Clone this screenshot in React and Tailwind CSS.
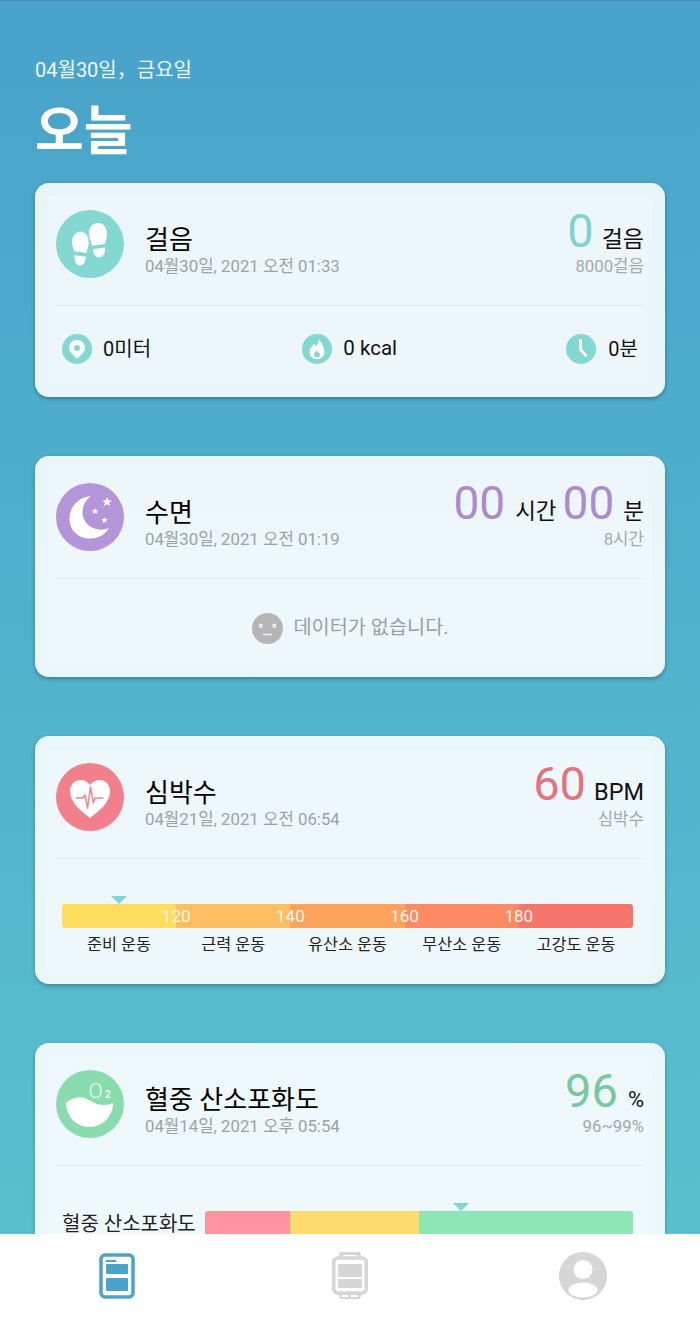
import React from "react"

function StepsIcon() {
  return (
    <svg viewBox="0 0 68 68" className="h-[68px] w-[68px] shrink-0">
      <circle cx="34" cy="34" r="34" fill="#84d8d2" />
      <g fill="#fff">
        <path d="M24.500 21.500c-4.500 0-8.500 5-8.500 10.500 0 3.500 1.400 6 2.200 9.200l12.300 1.800c.4-3.400 2.200-6.200 2.200-10.500 0-6-3.200-11-8.200-11z" />
        <path d="M18.500 45.200l11.300 1.600c-.2 5-2.300 8.800-6 8.700-3.600-.1-5.600-4.800-5.300-10.300z" />
        <path d="M42 13c-5.500 0-9 4.200-9 10.500 0 4.400 2 7.400 3 12.200l13-1.800c.4-3.300 2.500-6 2-10.800C50.500 17.300 47.500 13 42 13z" />
        <path d="M36.700 39.200l12.300-1.800c.5 5.200-1.500 9.600-5.500 10-3.600.3-6.200-3.200-6.800-8.200z" />
      </g>
    </svg>
  )
}

function SleepIcon() {
  return (
    <svg viewBox="0 0 68 68" className="h-[68px] w-[68px] shrink-0">
      <circle cx="34" cy="34" r="34" fill="#b495d9" />
      <path d="M35 13C22 14 13.500 24 13.500 36C13.500 48 23 55.500 34 55.500C43 55.500 49.500 51 53 45C50 46.500 46.500 47 43 46.500C33 45.500 26.500 38 26.500 29.500C26.500 23 29.500 17 35 13Z" fill="#ffffff" />
      <path d="M51 14l1.300 3.300 3.500.2-2.700 2.200.9 3.400-3-1.900-3 1.900.9-3.400-2.700-2.200 3.500-.2z" fill="#ffffff" />
      <path d="M39 25l.9 2.100 2.300.2-1.700 1.500.5 2.200-2-1.200-2 1.200.5-2.200-1.700-1.500 2.300-.2z" fill="#ffffff" />
      <path d="M48.500 34l.9 2.100 2.300.2-1.700 1.500.5 2.200-2-1.200-2 1.200.5-2.200-1.700-1.500 2.300-.2z" fill="#ffffff" />
    </svg>
  )
}

function HeartIcon() {
  return (
    <svg viewBox="0 0 68 68" className="h-[68px] w-[68px] shrink-0">
      <circle cx="34" cy="34" r="34" fill="#f27f8b" />
      <path d="M34 55C25 48 14 40 14 28c0-6.500 5-11 10.500-11 4 0 7.500 2 9.500 5 2-3 5.500-5 9.500-5C49 17 54 21.500 54 28c0 12-11 20-20 27z" fill="#fff" />
      <path d="M20 35h7l2-3 2.500 13 3-21 2.800 16 1.700-5h8" fill="none" stroke="#ee8a96" strokeWidth="1.600" strokeLinejoin="round" strokeLinecap="round" />
    </svg>
  )
}

function OxygenIcon() {
  return (
    <svg viewBox="0 0 68 68" className="h-[68px] w-[68px] shrink-0">
      <circle cx="34" cy="34" r="34" fill="#88dcae" />
      <path d="M10 33c4-4 9-6 15-5.500 7 .5 11 5 18 7 5 1 10 .5 14-1.500 0 13-10 24-23.500 24S10 46 10 33z" fill="#fff" />
      <text x="32.500" y="28" fontFamily="Roboto, sans-serif" fontSize="21" fill="#f2fbf6" fontWeight="300">O</text>
      <text x="49" y="28" fontFamily="Roboto, sans-serif" fontSize="10" fill="#f2fbf6" fontWeight="700">2</text>
    </svg>
  )
}

function PinIcon() {
  return (
    <svg viewBox="0 0 30 30" className="h-[30px] w-[30px] shrink-0">
      <circle cx="15" cy="15" r="15" fill="#84d8d2" />
      <path fillRule="evenodd" d="M15 6c-4.700 0-8 3.400-8 7.700 0 4 4.200 7.700 8 11 3.800-3.300 8-7 8-11C23 9.400 19.700 6 15 6zm0 5a3 3 0 110 6 3 3 0 010-6z" fill="#fff" />
    </svg>
  )
}

function FlameIcon() {
  return (
    <svg viewBox="0 0 30 30" className="h-[30px] w-[30px] shrink-0">
      <circle cx="15" cy="15" r="15" fill="#84d8d2" />
      <path fillRule="evenodd" d="M16.500 5c.7 3.500-1 5.500-3 7.500-.5-1-.7-1.800-.8-3C9.800 12 7.300 15 7.500 18.500c.3 4 3.500 6.700 7.500 6.700s7.500-2.900 7.500-6.900c0-5-3.500-10.500-6-13.300zM15 23.500c-1.800 0-3-1.200-3-2.800 0-1.600 1.400-2.600 2.400-4.200.3 1.200.8 1.600 1.600 1 0 .8 2 1.600 2 3.200 0 1.600-1.200 2.800-3 2.800z" fill="#fff" />
    </svg>
  )
}

function ClockIcon() {
  return (
    <svg viewBox="0 0 30 30" className="h-[30px] w-[30px] shrink-0">
      <circle cx="15" cy="15" r="15" fill="#84d8d2" />
      <path d="M13 5h2.600l.6 10.500 5.400 5.800-2 1.900-6.200-6.700z" fill="#fff" />
    </svg>
  )
}

function DeadFaceIcon() {
  return (
    <svg viewBox="0 0 31 31" className="h-[31px] w-[31px] shrink-0">
      <circle cx="15.500" cy="15.500" r="15.500" fill="#b5b5b5" />
      <path d="M7 11l3.500 3.500M10.500 11L7 14.500M20.500 11l3.500 3.500M24 11l-3.500 3.500M11 21.500h9" stroke="#eef6fa" strokeWidth="1.600" fill="none" />
    </svg>
  )
}

function Marker({ offset }) {
  return (
    <div className={offset}>
      <svg viewBox="0 0 16 8" className="block h-2 w-4">
        <polygon points="0,0 16,0 8,8" fill="#7fd6d6" />
      </svg>
    </div>
  )
}

function TodayTab() {
  return (
    <svg viewBox="0 0 36 46" className="h-[46px] w-9">
      <rect x="2" y="2" width="32" height="42" rx="4" fill="none" stroke="#4ba3c9" strokeWidth="3.500" />
      <rect x="7" y="7" width="10" height="2" fill="#4ba3c9" />
      <rect x="7" y="11" width="22" height="10" rx="1" fill="#4ba3c9" />
      <rect x="7" y="25" width="22" height="13" rx="1" fill="#4ba3c9" />
    </svg>
  )
}

function WatchTab() {
  return (
    <svg viewBox="0 0 36 47" className="h-[47px] w-9">
      <path d="M6 7l2-7h20l2 7zM6 40l2 7h20l2-7z" fill="#d6d6d6" />
      <path d="M11 3h14v2H11zM10 43h6v2h-6zM19 43h7v2h-7z" fill="#fff" />
      <rect x="1.750" y="6" width="32.500" height="35" rx="4" fill="#fff" stroke="#d6d6d6" strokeWidth="3.500" />
      <rect x="6" y="12" width="24" height="13" fill="#d6d6d6" />
      <rect x="6" y="27" width="24" height="9" fill="#d6d6d6" />
    </svg>
  )
}

function ProfileTab() {
  return (
    <svg viewBox="0 0 48 48" className="h-12 w-12">
      <circle cx="24" cy="24" r="24" fill="#d6d6d6" />
      <circle cx="24" cy="17.500" r="9.500" fill="#fff" />
      <ellipse cx="24" cy="38" rx="14.500" ry="7.500" fill="#fff" />
    </svg>
  )
}

function Card({ icon, title, date, right, sub, children }) {
  return (
    <div className="rounded-[14px] bg-[#ffffffe0] p-[13px] shadow-[0_2px_4px_rgba(0,0,0,0.28)]">
      <div className="bg-white/20 pt-[14px] pr-2 pl-2 shadow-[0_0_5px_rgba(255,255,255,0.2)]">
        <div className="flex h-[68px] items-start">
          {icon}
          <div className="ml-[21px] flex-1 pt-[15px]">
            <div className="h-[31px] text-[26px] leading-[31px] text-black">{title}</div>
            <div className="h-[20px] text-[16.8px] leading-[20px] text-[#9da2a5]">{date}</div>
          </div>
          <div className="-mt-[5px] text-right">
            <div className="flex h-[51px] items-baseline justify-end">{right}</div>
            <div className="text-[16.8px] leading-[20px] text-[#a5aaad]">{sub}</div>
          </div>
        </div>
        <div className="mt-[27px] h-px bg-[#e0e8ec]" />
        {children}
      </div>
    </div>
  )
}

const zones = [
  { label: "준비 운동", color: "bg-[#ffdd5e]", mark: "120" },
  { label: "근력 운동", color: "bg-[#ffbf60]", mark: "140" },
  { label: "유산소 운동", color: "bg-[#ffa25c]", mark: "160" },
  { label: "무산소 운동", color: "bg-[#fc8a64]", mark: "180" },
  { label: "고강도 운동", color: "bg-[#f6766c]", mark: null },
]

function HeartRateBar() {
  return (
    <div className="pt-[37px] pr-[11px] pb-[15px] pl-[6px]">
      <Marker offset="ml-[49px]" />
      <div className="flex h-6 overflow-hidden rounded-[3px]">
        {zones.map((z) => (
          <div key={z.label} className={`flex-1 ${z.color}`} />
        ))}
      </div>
      <div className="-mt-6 flex h-6">
        {zones.map((z) => (
          <div key={z.label} className="flex flex-1 justify-end">
            {z.mark && (
              <span className="w-0 overflow-visible">
                <span className="block w-10 -translate-x-5 text-center text-[17px] leading-6 text-[#fff8ec]">{z.mark}</span>
              </span>
            )}
          </div>
        ))}
      </div>
      <div className="mt-[6px] flex">
        {zones.map((z) => (
          <div key={z.label} className="flex-1 text-center text-[16.3px] leading-[22px] whitespace-nowrap text-[#222]">
            {z.label}
          </div>
        ))}
      </div>
    </div>
  )
}

export default function App() {
  return (
    <div className="flex h-[1318px] w-[700px] flex-col overflow-hidden font-['Roboto','Noto_Sans_CJK_KR',sans-serif]">
      <div className="min-h-0 flex-1 overflow-hidden border-t border-[#3f8fb0] bg-gradient-to-b from-[#48a2ca] to-[#5ac0cf] px-[35px]">
        <div className="mt-[55px] text-[20px] leading-[28px] text-[#eef8fc]">04월30일，금요일</div>
        <div className="mt-[18px] text-[53px] leading-[60px] font-semibold text-white">오늘</div>
        <div className="mt-[21px] flex flex-col gap-[59px]">
          <Card
            icon={<StepsIcon />}
            title="걸음"
            date="04월30일, 2021 오전 01:33"
            right={
              <>
                <span className="text-[47px] leading-[51px] text-[#7fd3cd]">0</span>
                <span className="ml-[8px] text-[23px] text-[#111]">걸음</span>
              </>
            }
            sub="8000걸음"
          >
            <div className="flex h-[78px] items-center justify-between pt-[7px] pr-[6px] pl-[6px]">
              <div className="flex items-center gap-[11px]">
                <PinIcon />
                <span className="text-[20px] text-[#111]">0미터</span>
              </div>
              <div className="mr-[18px] flex items-center gap-[11px]">
                <FlameIcon />
                <span className="text-[20.5px] text-[#111]">0 kcal</span>
              </div>
              <div className="flex items-center gap-[12px]">
                <ClockIcon />
                <span className="text-[20px] text-[#111]">0분</span>
              </div>
            </div>
          </Card>

          <Card
            icon={<SleepIcon />}
            title="수면"
            date="04월30일, 2021 오전 01:19"
            right={
              <>
                <span className="text-[46px] leading-[51px] text-[#ab8bcd]">00</span>
                <span className="mr-[6px] ml-[10px] text-[22.5px] text-[#111]">시간</span>
                <span className="text-[46px] leading-[51px] text-[#ab8bcd]">00</span>
                <span className="ml-[9px] text-[22.5px] text-[#111]">분</span>
              </>
            }
            sub="8시간"
          >
            <div className="flex h-[85px] items-center justify-center gap-[11px] pt-[13px]">
              <DeadFaceIcon />
              <span className="text-[19.7px] text-[#9a9fa2]">데이터가 없습니다.</span>
            </div>
          </Card>

          <Card
            icon={<HeartIcon />}
            title="심박수"
            date="04월21일, 2021 오전 06:54"
            right={
              <>
                <span className="text-[47px] leading-[51px] text-[#e4727f]">60</span>
                <span className="ml-[8px] text-[23.5px] text-[#111]">BPM</span>
              </>
            }
            sub="심박수"
          >
            <HeartRateBar />
          </Card>

          <Card
            icon={<OxygenIcon />}
            title="혈중 산소포화도"
            date="04월14일, 2021 오후 05:54"
            right={
              <>
                <span className="text-[47px] leading-[51px] text-[#78c8a0]">96</span>
                <span className="ml-[10px] text-[22px] text-[#111]">%</span>
              </>
            }
            sub="96~99%"
          >
            <div className="pt-[37px] pr-[11px] pb-[15px] pl-[6px]">
              <Marker offset="ml-[391px]" />
              <div className="flex items-start">
                <div className="w-[143px] pt-px text-[20px] leading-[24px] whitespace-nowrap text-[#222]">혈중 산소포화도</div>
                <div className="flex h-6 flex-1 overflow-hidden rounded-[3px]">
                  <div className="w-[85px] bg-[#fd939e]" />
                  <div className="w-[129px] bg-[#fedb6e]" />
                  <div className="flex-1 bg-[#8de6b6]" />
                </div>
              </div>
            </div>
          </Card>
        </div>
      </div>
      <nav className="flex h-[84px] shrink-0 items-start bg-white pt-[18px]">
        <div className="mt-px ml-[99px]">
          <TodayTab />
        </div>
        <div className="ml-[197px]">
          <WatchTab />
        </div>
        <div className="ml-[191px]">
          <ProfileTab />
        </div>
      </nav>
    </div>
  )
}
